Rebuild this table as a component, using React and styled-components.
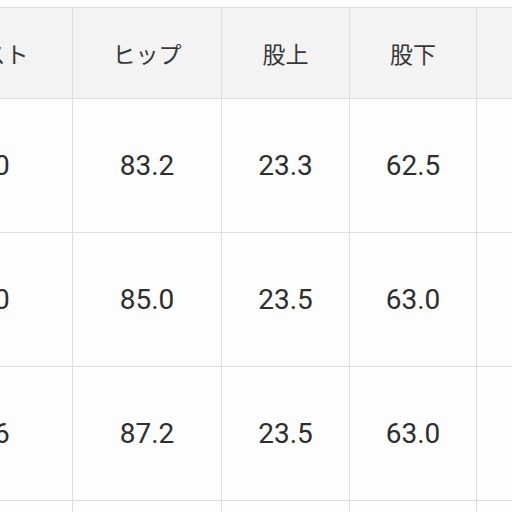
import React from 'react';
import styled, { createGlobalStyle } from 'styled-components';

const GlobalStyle = createGlobalStyle`
  html, body {
    margin: 0;
    padding: 0;
    background: #fcfcfc;
  }
`;

const Viewport = styled.div`
  width: 512px;
  height: 512px;
  overflow: hidden;
  padding-top: 7px;
  box-sizing: border-box;
  background: #fcfcfc;
`;

const Table = styled.table`
  width: ${p => p.$width}px;
  margin-left: -108px;
  border-collapse: collapse;
  table-layout: fixed;
  font-family: Roboto, "Noto Sans CJK JP", sans-serif;
  color: #2e2e2e;
`;

const HeadCell = styled.th`
  height: 90px;
  padding: 0;
  background: #f3f3f3;
  border: 1.5px solid #dcdfe0;
  font-family: "Noto Sans CJK JP", sans-serif;
  font-weight: 400;
  font-size: 23px;
  color: #383838;
  text-align: center;
  vertical-align: middle;
  white-space: nowrap;
`;

const Cell = styled.td`
  height: 133px;
  padding: 0;
  background: #fdfdfd;
  border: 1.5px solid #dcdfe0;
  font-size: 28px;
  text-align: center;
  vertical-align: middle;
`;

const widths = [180, 149, 128, 127, 140];
const headers = ['ウエスト', 'ヒップ', '股上', '股下', ''];
const rows = [
  ['64.0', '83.2', '23.3', '62.5', ''],
  ['67.0', '85.0', '23.5', '63.0', ''],
  ['69.6', '87.2', '23.5', '63.0', ''],
  ['', '', '', '', ''],
];

export default function App() {
  const total = widths.reduce((a, b) => a + b, 0);
  return (
    <>
      <GlobalStyle />
      <Viewport>
        <Table $width={total}>
          <colgroup>
            {widths.map((w, i) => (
              <col key={i} style={{ width: w }} />
            ))}
          </colgroup>
          <thead>
            <tr>
              {headers.map((h, i) => (
                <HeadCell key={i}>{h}</HeadCell>
              ))}
            </tr>
          </thead>
          <tbody>
            {rows.map((r, ri) => (
              <tr key={ri}>
                {r.map((v, ci) => (
                  <Cell key={ci}>{v}</Cell>
                ))}
              </tr>
            ))}
          </tbody>
        </Table>
      </Viewport>
    </>
  );
}
